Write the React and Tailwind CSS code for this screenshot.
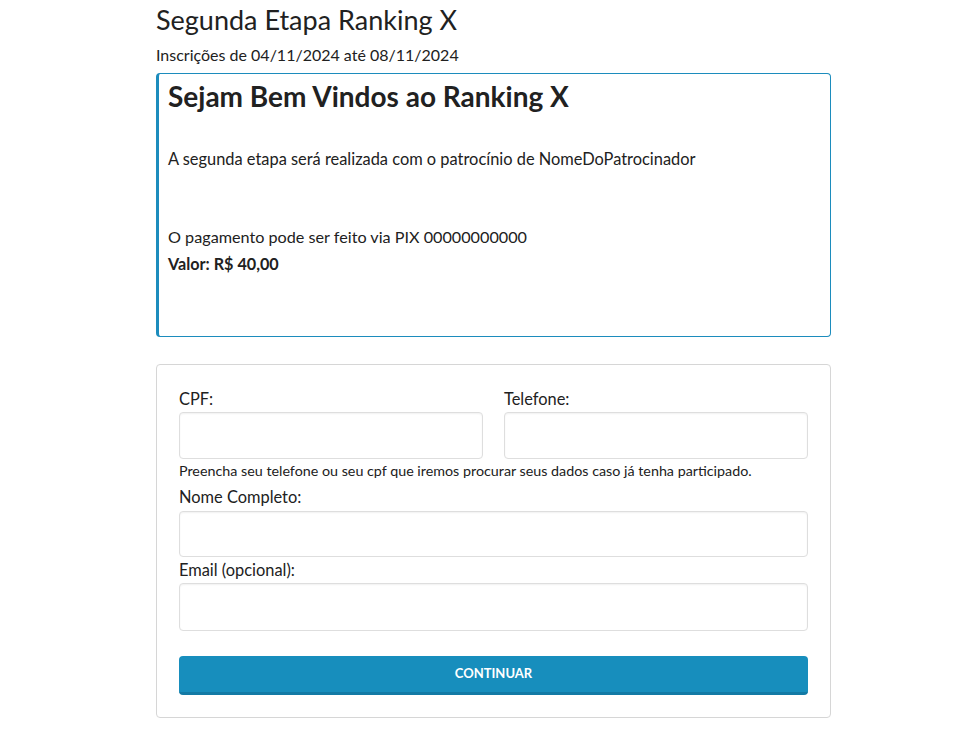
export default function App() {
  const font = { fontFamily: 'Lato, "Noto Sans", sans-serif' };
  const inputCls = "mt-[2px] block h-[47px] w-full rounded-[4px] border border-[#dedede] shadow-[inset_0_1px_2px_rgba(0,0,0,0.06)] outline-none";
  return (
    <div className="min-h-[729px] bg-white text-[#212121]" style={font}>
      <div className="ml-[156px] w-[675px] pt-[4px]">
        <h1 className="text-[27px] leading-[32px] font-normal">Segunda Etapa Ranking X</h1>
        <p className="mt-[8px] text-[16px] leading-[22px]">Inscrições de 04/11/2024 até 08/11/2024</p>
        <div className="mt-[7px] h-[264px] rounded-[4px] border border-l-[3px] border-[#1c8cbd] pl-[9px] pr-3">
          <h2 className="mt-[5px] text-[28px] leading-[34px] font-bold">Sejam Bem Vindos ao Ranking X</h2>
          <p className="mt-[34px] text-[16.4px] leading-[24px]">A segunda etapa será realizada com o patrocínio de NomeDoPatrocinador</p>
          <p className="mt-[54px] text-[16.2px] leading-[24px]">O pagamento pode ser feito via PIX 00000000000</p>
          <p className="mt-[3px] text-[16.2px] leading-[24px] font-bold">Valor: R$ 40,00</p>
        </div>
        <div className="mt-[27px] rounded-[4px] border border-[#d6d6d6] px-[22px] pt-[23px] pb-[22px]">
          <div className="flex gap-[21px]">
            <div className="flex-1">
              <label className="block text-[16.4px] leading-[22px]">CPF:</label>
              <input className={inputCls} />
            </div>
            <div className="flex-1">
              <label className="block text-[16.4px] leading-[22px]">Telefone:</label>
              <input className={inputCls} />
            </div>
          </div>
          <p className="mt-[2px] text-[14.3px] leading-[20px]">Preencha seu telefone ou seu cpf que iremos procurar seus dados caso já tenha participado.</p>
          <label className="mt-[5px] block text-[16.4px] leading-[22px]">Nome Completo:</label>
          <input className="mt-[3px] block h-[46px] w-full rounded-[4px] border border-[#dedede] shadow-[inset_0_1px_2px_rgba(0,0,0,0.06)] outline-none" />
          <label className="mt-[2px] block text-[16.4px] leading-[22px]">Email (opcional):</label>
          <input className="mt-[2px] block h-[48px] w-full rounded-[4px] border border-[#dedede] shadow-[inset_0_1px_2px_rgba(0,0,0,0.06)] outline-none" />
          <button className="mt-[25px] block h-[39px] w-full rounded-[4px] border-b-[3px] border-[#137aa5] bg-[#178ebd] text-[13px] font-bold text-white">CONTINUAR</button>
        </div>
      </div>
    </div>
  );
}
